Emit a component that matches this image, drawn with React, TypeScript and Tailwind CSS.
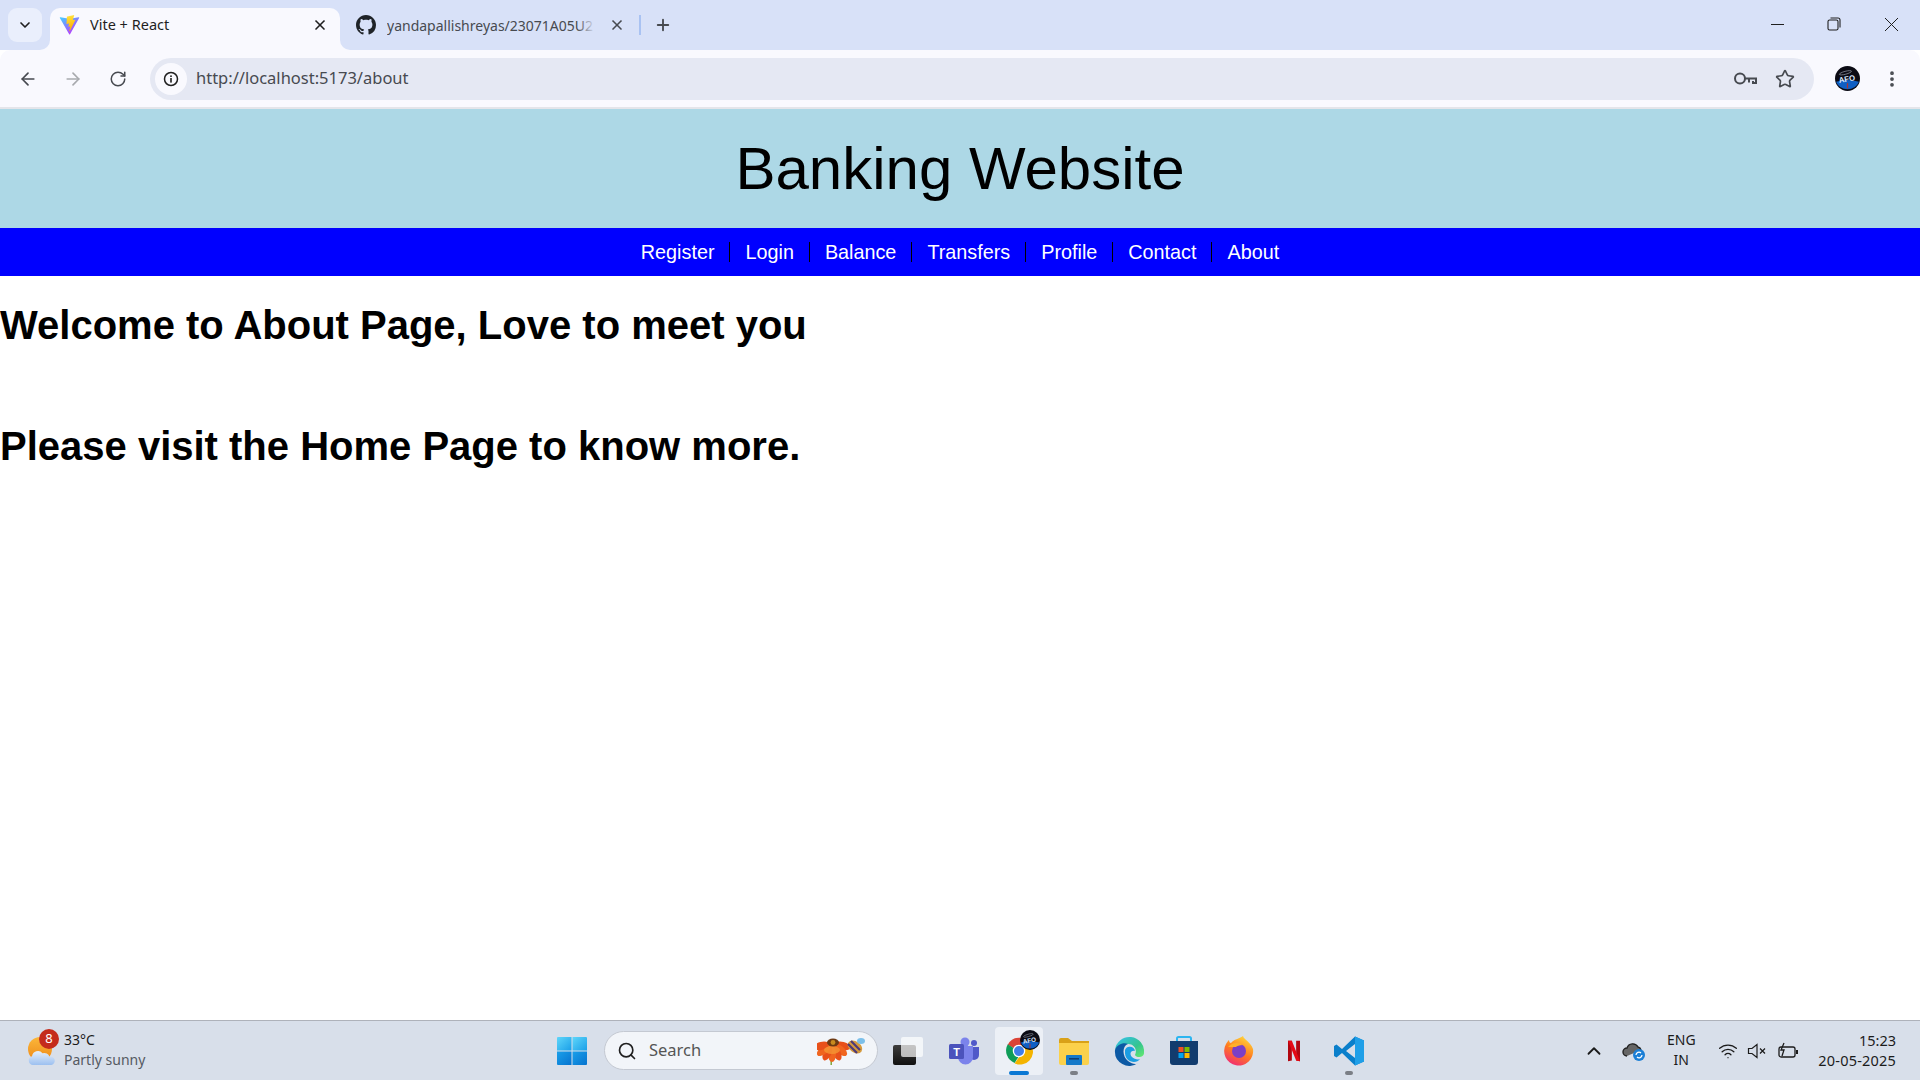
import React from "react";
import { ArrowLeft, ArrowRight, RotateCw, ChevronDown, ChevronUp, X, Plus, Star, EllipsisVertical, Search, Wifi } from "lucide-react";

const navLinks = ["Register", "Login", "Balance", "Transfers", "Profile", "Contact", "About"];

function ViteLogo() {
  return (
    <svg width="21" height="20" viewBox="0 0 410 404">
      <defs>
        <linearGradient id="viteA" x1="0" y1="0" x2="0.7" y2="1">
          <stop offset="0" stopColor="#41d1ff" />
          <stop offset="1" stopColor="#bd34fe" />
        </linearGradient>
        <linearGradient id="viteB" x1="0.4" y1="0" x2="0.5" y2="1">
          <stop offset="0" stopColor="#ffea83" />
          <stop offset="0.1" stopColor="#ffdd35" />
          <stop offset="1" stopColor="#ffa800" />
        </linearGradient>
      </defs>
      <path d="M399.641 59.5246L215.643 388.545C211.844 395.338 202.084 395.378 198.228 388.618L10.5817 59.5563C6.38087 52.1896 12.6802 43.2665 21.0281 44.7586L205.223 77.6824C206.398 77.8924 207.601 77.8904 208.776 77.6763L389.119 44.8058C397.439 43.2894 403.768 52.1434 399.641 59.5246Z" fill="url(#viteA)" />
      <path d="M292.965 1.5744L156.801 28.2552C154.563 28.6937 152.906 30.5903 152.771 32.8664L144.395 174.33C144.198 177.662 147.258 180.248 150.51 179.498L188.42 170.749C191.967 169.931 195.172 173.055 194.443 176.622L183.18 231.775C182.422 235.487 185.907 238.661 189.532 237.56L212.947 230.446C216.577 229.344 220.065 232.527 219.297 236.242L201.398 322.875C200.278 328.294 207.486 331.249 210.492 326.603L212.5 323.5L323.454 102.072C325.312 98.3645 322.108 94.137 318.036 94.9228L279.014 102.454C275.347 103.161 272.227 99.746 273.262 96.1583L298.731 7.86689C299.767 4.27314 296.636 0.855181 292.965 1.5744Z" fill="url(#viteB)" />
    </svg>
  );
}

function GithubMark() {
  return (
    <svg width="20" height="20" viewBox="0 0 16 16" fill="#1f2328">
      <path d="M8 0C3.58 0 0 3.58 0 8c0 3.54 2.29 6.53 5.47 7.59.4.07.55-.17.55-.38 0-.19-.01-.82-.01-1.49-2.01.37-2.53-.49-2.69-.94-.09-.23-.48-.94-.82-1.13-.28-.15-.68-.52-.01-.53.63-.01 1.08.58 1.23.82.72 1.21 1.87.87 2.33.66.07-.52.28-.87.51-1.07-1.78-.2-3.64-.89-3.64-3.95 0-.87.31-1.59.82-2.15-.08-.2-.36-1.02.08-2.12 0 0 .67-.21 2.2.82.64-.18 1.32-.27 2-.27s1.36.09 2 .27c1.53-1.04 2.2-.82 2.2-.82.44 1.1.16 1.92.08 2.12.51.56.82 1.27.82 2.15 0 3.07-1.87 3.75-3.65 3.95.29.25.54.73.54 1.48 0 1.07-.01 1.93-.01 2.2 0 .21.15.46.55.38A8.01 8.01 0 0 0 16 8c0-4.42-3.58-8-8-8z" />
    </svg>
  );
}

function Avatar({ size }: { size: number }) {
  return (
    <svg width={size} height={size} viewBox="0 0 24 24">
      <circle cx="12" cy="12" r="12" fill="#0b0b14" />
      <path d="M1 15 Q12 12 23 15 A12 12 0 0 1 1 15 Z" fill="#0f5fc4" />
      <ellipse cx="10" cy="6.5" rx="6" ry="1.4" fill="none" stroke="#8a8f9a" strokeWidth="0.7" transform="rotate(-15 10 6.5)" />
      <text x="11.5" y="15" textAnchor="middle" fontSize="7.5" fontWeight="700" fill="#dfeaff" transform="rotate(-10 12 13)" fontFamily="'Liberation Sans', sans-serif">AFO</text>
      <rect x="11.4" y="16.5" width="1.2" height="5" fill="#a33" />
    </svg>
  );
}

function WeatherIcon() {
  return (
    <div className="relative h-[36px] w-[36px]">
      <svg width="36" height="36" viewBox="0 0 36 36" className="absolute left-0 top-0">
        <defs>
          <linearGradient id="sun" x1="0" y1="0" x2="0" y2="1">
            <stop offset="0" stopColor="#fbb73a" />
            <stop offset="1" stopColor="#ee8a1a" />
          </linearGradient>
          <linearGradient id="cloud" x1="0" y1="0" x2="0" y2="1">
            <stop offset="0" stopColor="#e6effb" />
            <stop offset="1" stopColor="#9cc0f0" />
          </linearGradient>
        </defs>
        <circle cx="13" cy="16" r="12" fill="url(#sun)" />
        <path d="M6 32 a4.5 4.5 0 0 1 -1 -8.8 a6 6 0 0 1 10.5 -3 a5.5 5.5 0 0 1 7 3.5 a4.2 4.2 0 0 1 2 8.3 Z" fill="url(#cloud)" />
      </svg>
      <span className="absolute left-[12px] top-[-4px] flex h-[20px] w-[20px] items-center justify-center rounded-full bg-[#c42b1c] text-[13px] text-white">8</span>
    </div>
  );
}

function WindowsLogo() {
  return (
    <svg width="30" height="30" viewBox="0 0 30 30">
      <defs>
        <linearGradient id="winA" x1="0" y1="0" x2="1" y2="1">
          <stop offset="0" stopColor="#5fd6fa" />
          <stop offset="1" stopColor="#1a9fe8" />
        </linearGradient>
        <linearGradient id="winB" x1="0" y1="0" x2="1" y2="1">
          <stop offset="0" stopColor="#1aa0ea" />
          <stop offset="1" stopColor="#0673cf" />
        </linearGradient>
      </defs>
      <path d="M1 1 H14.5 V14.5 H0 V2 a1 1 0 0 1 1 -1 Z" fill="url(#winA)" />
      <path d="M15.5 1 H29 a1 1 0 0 1 1 1 V14.5 H15.5 Z" fill="url(#winA)" />
      <path d="M0 15.5 H14.5 V29 H1 a1 1 0 0 1 -1 -1 Z" fill="url(#winB)" />
      <path d="M15.5 15.5 H30 V28 a1 1 0 0 1 -1 1 H15.5 Z" fill="url(#winB)" />
    </svg>
  );
}

function SearchFlower() {
  const petals = [-75, -50, -25, 0, 25, 50, 75];
  return (
    <svg width="48" height="30" viewBox="0 0 48 30">
      <rect x="13.5" y="22" width="1.4" height="7" fill="#79a12e" />
      {petals.map((deg) => (
        <ellipse key={deg} cx="15" cy="18" rx="4" ry="8" fill={deg % 50 === 0 ? "#f0651f" : "#e8501a"} transform={`rotate(${deg} 15 7) `} />
      ))}
      <ellipse cx="15" cy="14" rx="8" ry="4" fill="#f59a35" opacity="0.75" />
      <ellipse cx="16" cy="6.5" rx="6" ry="4" fill="#6d3a12" />
      <circle cx="16" cy="6.5" r="2.4" fill="#c78a1e" />
      <ellipse cx="38" cy="11" rx="8" ry="5.5" fill="#d59a3c" transform="rotate(35 38 11)" />
      <path d="M34 5 L43 14 M31 8 L40 17" stroke="#4d3a78" strokeWidth="2.2" />
      <ellipse cx="44" cy="5" rx="4" ry="3" fill="#7cc0ea" />
    </svg>
  );
}

function TaskViewIcon() {
  return (
    <div className="relative h-[28px] w-[30px]">
      <div className="absolute bottom-0 left-0 h-[20px] w-[23px] rounded-[2px] bg-gradient-to-b from-[#3d3d3d] to-[#111]" />
      <div className="absolute right-0 top-0 h-[20px] w-[22px] rounded-[2px] bg-white/70" />
    </div>
  );
}

function TeamsIcon() {
  return (
    <svg width="30" height="28" viewBox="0 0 30 28">
      <circle cx="25" cy="6" r="3" fill="#5059c9" />
      <path d="M20 10 H30 V18 a5 5 0 0 1 -10 0 Z" fill="#5059c9" />
      <circle cx="16" cy="5" r="4.5" fill="#7b83eb" />
      <path d="M9 9 H24 V20 a7.5 7.5 0 0 1 -15 0 Z" fill="#7b83eb" />
      <rect x="0" y="7" width="15" height="15" rx="1.5" fill="#4b53bc" />
      <text x="7.5" y="19" textAnchor="middle" fontSize="11" fontWeight="700" fill="#fff" fontFamily="'Liberation Sans', sans-serif">T</text>
    </svg>
  );
}

function ChromeIcon() {
  return (
    <svg width="30" height="30" viewBox="0 0 48 48">
      <path d="M24 24 L6 14 A21 21 0 0 1 44 16 L24 16 Z" fill="#db4437" />
      <path d="M6 13 A21 21 0 0 0 17 43 L27 27 Z" fill="#0f9d58" />
      <path d="M44 15 A21 21 0 0 1 17 44 L30 25 L24 15 Z" fill="#f4b400" />
      <circle cx="24" cy="24" r="10" fill="#fff" />
      <circle cx="24" cy="24" r="8" fill="#3f7ee8" />
    </svg>
  );
}

function FolderIcon() {
  return (
    <svg width="30" height="28" viewBox="0 0 30 28">
      <path d="M0 3 a2 2 0 0 1 2 -2 H9 L13 4 H30 V10 H0 Z" fill="#d9a118" />
      <path d="M0 6 H30 V26 a2 2 0 0 1 -2 2 H2 a2 2 0 0 1 -2 -2 Z" fill="#fbd14b" />
      <rect x="7" y="18" width="16" height="10" rx="1" fill="#1479c9" />
      <rect x="10" y="21" width="10" height="1.6" fill="#0c3f75" />
    </svg>
  );
}

function EdgeIcon() {
  return (
    <svg width="30" height="30" viewBox="0 0 30 30">
      <defs>
        <linearGradient id="edgeA" x1="0" y1="0" x2="1" y2="1">
          <stop offset="0" stopColor="#35c1f1" />
          <stop offset="0.6" stopColor="#35c48f" />
          <stop offset="1" stopColor="#66eb6e" />
        </linearGradient>
      </defs>
      <path d="M1 14 A14.5 14.5 0 0 1 30 17 C30 22 22 22 21 19 C24 13 19 7 13 8 C7 8 2 12 1 14 Z" fill="url(#edgeA)" />
      <path d="M1 14 C3 8 10 6 14 8 C8 10 8 20 14 25 C18 28 22 29 24 27 A14.5 14.5 0 0 1 1 14 Z" fill="#0c59a4" />
      <path d="M11 15 C11 10 20 9 21 15 C17 14 15 18 18 21 C20 23 24 24 26 23 C22 29 10 26 11 15 Z" fill="#1b9de2" />
    </svg>
  );
}

function StoreIcon() {
  return (
    <svg width="30" height="30" viewBox="0 0 30 30">
      <path d="M8 6 V2.5 a1.5 1.5 0 0 1 1.5 -1.5 H20.5 a1.5 1.5 0 0 1 1.5 1.5 V6" fill="none" stroke="#2cb5f0" strokeWidth="2" />
      <path d="M1 5 H29 V26 a3 3 0 0 1 -3 3 H4 a3 3 0 0 1 -3 -3 Z" fill="#123c6e" />
      <rect x="9.5" y="11" width="5" height="5" fill="#f25022" />
      <rect x="15.5" y="11" width="5" height="5" fill="#7fba00" />
      <rect x="9.5" y="17" width="5" height="5" fill="#00a4ef" />
      <rect x="15.5" y="17" width="5" height="5" fill="#ffb900" />
    </svg>
  );
}

function FirefoxIcon() {
  return (
    <svg width="30" height="30" viewBox="0 0 30 30">
      <defs>
        <linearGradient id="foxA" x1="0.7" y1="0" x2="0.2" y2="1">
          <stop offset="0" stopColor="#ffd53a" />
          <stop offset="0.5" stopColor="#ff7a1f" />
          <stop offset="1" stopColor="#f0257c" />
        </linearGradient>
      </defs>
      <path d="M19 0 C20 4 26 5 29 13 A14.5 14.5 0 1 1 2 8 C3 6 4 5 5 4 C5 6 6 7 7 7 C10 3 15 3 19 0 Z" fill="url(#foxA)" />
      <circle cx="15" cy="15" r="7" fill="#7b3fc6" />
      <path d="M4 11 C8 6 15 6 19 9 C15 9 13 10 12 11 C9 11 7 11 4 11 Z" fill="#ffb02a" />
    </svg>
  );
}

function NetflixIcon() {
  return (
    <svg width="12" height="22" viewBox="0 0 14 24">
      <path d="M0 0 H4.5 V23 L0 24 Z" fill="#b1060f" />
      <path d="M9.5 0 H14 V24 L9.5 23 Z" fill="#b1060f" />
      <path d="M0 0 H4.5 L14 24 L9.5 23 Z" fill="#e50914" />
    </svg>
  );
}

function VsCodeIcon() {
  return (
    <svg width="30" height="30" viewBox="0 0 30 30">
      <path d="M21 0.5 L30 4.5 V25.5 L21 29.5 L8 17 L2.5 21.5 L0 20 V10 L2.5 8.5 L8 13 Z M21 8 L12 15 L21 22 Z" fill="#0a7fcb" />
      <path d="M21 0.5 L30 4.5 V25.5 L21 29.5 Z" fill="#1f9fe8" />
    </svg>
  );
}

function TaskbarSlot({ children, active, dot }: { children: React.ReactNode; active?: boolean; dot?: boolean }) {
  return (
    <div className={`relative flex h-[48px] w-[48px] items-center justify-center rounded-[4px] ${active ? "bg-[#ecf0f6]" : ""}`}>
      {children}
      {active && <span className="absolute bottom-0 left-[14px] h-[4px] w-[20px] rounded-full bg-[#0a78d4]" />}
      {dot && <span className="absolute bottom-0 left-[20px] h-[4px] w-[8px] rounded-full bg-[#7b7f86]" />}
    </div>
  );
}

export default function App() {
  return (
    <div className="flex h-[1080px] w-[1920px] flex-col overflow-hidden bg-white font-['Liberation_Sans',sans-serif]">
      {/* tab strip */}
      <div className="flex h-[50px] items-end bg-[#d8e1f8] font-['Noto_Sans',sans-serif]">
        <div className="mb-[8px] ml-[8px] flex h-[34px] w-[34px] items-center justify-center rounded-[9px] bg-[#eaeffc] text-[#1f1f1f]">
          <ChevronDown size={16} strokeWidth={2.5} />
        </div>
        <div className="relative ml-[8px] flex h-[42px] w-[290px] items-center rounded-t-[10px] bg-[#f9f9fe] pb-[8px] pl-[9px] pr-[12px]">
          <div className="absolute bottom-0 left-[-10px] h-[10px] w-[10px] bg-[#f9f9fe]">
            <div className="h-full w-full rounded-br-[10px] bg-[#d8e1f8]" />
          </div>
          <div className="absolute bottom-0 right-[-10px] h-[10px] w-[10px] bg-[#f9f9fe]">
            <div className="h-full w-full rounded-bl-[10px] bg-[#d8e1f8]" />
          </div>
          <ViteLogo />
          <span className="ml-[10px] flex-1 text-[14.5px] text-[#1f1f1f]">Vite + React</span>
          <X size={16} strokeWidth={2.5} className="text-[#1f1f1f]" />
        </div>
        <div className="flex h-[42px] items-center pb-[8px] pl-[16px]">
          <GithubMark />
          <div className="relative ml-[11px] w-[208px] overflow-hidden whitespace-nowrap text-[14px] text-[#474a50]">
            yandapallishreyas/23071A05U2
            <div className="absolute bottom-0 right-0 top-0 w-[18px] bg-gradient-to-r from-transparent to-[#d8e1f8]" />
          </div>
          <X size={16} strokeWidth={2.5} className="ml-[14px] text-[#474a50]" />
          <span className="ml-[14px] h-[20px] w-[1.5px] bg-[#a9c2f2]" />
          <Plus size={18} strokeWidth={2.5} className="ml-[13px] text-[#474a50]" />
        </div>
        <div className="ml-auto flex h-[50px] items-center pb-[2px] pr-[22px] text-[#1f1f1f]">
          <svg width="13" height="13" viewBox="0 0 13 13" stroke="#1f1f1f" strokeWidth="1">
            <path d="M0 6.5 H13" />
          </svg>
          <svg width="14" height="14" viewBox="0 0 14 14" fill="none" stroke="#1f1f1f" strokeWidth="1.1" className="ml-[43px]">
            <rect x="1" y="3" width="10" height="10" rx="1.6" />
            <path d="M3.5 1 H11 a2 2 0 0 1 2 2 V10.5" />
          </svg>
          <svg width="13" height="13" viewBox="0 0 13 13" stroke="#1f1f1f" strokeWidth="1" className="ml-[44px]">
            <path d="M0 0 L13 13 M13 0 L0 13" />
          </svg>
        </div>
      </div>

      {/* toolbar */}
      <div className="flex h-[57px] items-center rounded-t-[10px] bg-[#f9f9fe] pl-[18px] pr-[18px] font-['Noto_Sans',sans-serif]">
        <ArrowLeft size={20} strokeWidth={2} className="text-[#474a50]" />
        <ArrowRight size={20} strokeWidth={2} className="ml-[25px] text-[#a8aaae]" />
        <RotateCw size={18} strokeWidth={2} className="ml-[26px] text-[#474a50]" />
        <div className="ml-[23px] flex h-[42px] flex-1 items-center rounded-full bg-[#e5e8f3] pl-[5px] pr-[19px]">
          <span className="flex h-[32px] w-[32px] items-center justify-center rounded-full bg-[#f9f9fe]">
            <svg width="16" height="16" viewBox="0 0 16 16" fill="none">
              <circle cx="8" cy="8" r="6.5" stroke="#1f1f1f" strokeWidth="1.5" />
              <rect x="7.2" y="7" width="1.6" height="4.6" fill="#1f1f1f" />
              <rect x="7.2" y="4.4" width="1.6" height="1.6" fill="#1f1f1f" />
            </svg>
          </span>
          <span className="ml-[9px] flex-1 text-[16.5px] text-[#474a50]">http://localhost:5173/about</span>
          <svg width="23" height="13" viewBox="0 0 23 13" fill="none" stroke="#474a50" strokeWidth="2">
            <circle cx="6" cy="6.5" r="5" />
            <path d="M11 6.5 H22 V11 H19 V9 M15 7 V10.5" />
          </svg>
          <Star size={20} strokeWidth={2} className="ml-[18px] text-[#474a50]" />
        </div>
        <div className="ml-[21px]">
          <Avatar size={25} />
        </div>
        <EllipsisVertical size={20} strokeWidth={2.5} className="ml-[22px] text-[#474a50]" />
      </div>
      <div className="h-[2px] bg-[#e4e5ea]" />

      {/* page */}
      <div className="flex-1 text-black">
        <header className="flex h-[119px] items-center justify-center bg-[#add8e6]">
          <h1 className="text-[60px] font-normal">Banking Website</h1>
        </header>
        <nav className="flex h-[48px] items-center justify-center bg-[#0000ff]">
          {navLinks.map((link, i) => (
            <a key={link} className={`px-[15px] text-[19.8px] leading-[20px] text-white ${i < navLinks.length - 1 ? "border-r border-black" : ""}`}>
              {link}
            </a>
          ))}
        </nav>
        <h2 className="mt-[26px] text-[40px] font-bold leading-[46px]">Welcome to About Page, Love to meet you</h2>
        <h2 className="mt-[75px] text-[40px] font-bold leading-[46px]">Please visit the Home Page to know more.</h2>
      </div>

      {/* taskbar */}
      <div className="flex h-[60px] items-center border-t border-[#aeb2ba] bg-[#d8dfea] font-['Noto_Sans',sans-serif]">
        <div className="flex w-[548px] items-center pl-[27px]">
          <WeatherIcon />
          <div className="-mt-[2px] ml-[1px] flex flex-col text-[14px] leading-[20px]">
            <span className="text-[#1b1b1b]">33°C</span>
            <span className="text-[#555a62]">Partly sunny</span>
          </div>
        </div>
        <TaskbarSlot>
          <WindowsLogo />
        </TaskbarSlot>
        <div className="ml-[8px] flex h-[39px] w-[274px] items-center rounded-full border border-[#c4c9d2] bg-[#f2f5f9] pl-[12px]">
          <Search size={20} strokeWidth={2} className="text-[#1f1f1f]" />
          <span className="ml-[12px] flex-1 text-[16.5px] text-[#555]">Search</span>
          <SearchFlower />
          <span className="w-[12px]" />
        </div>
        <div className="ml-[6px] flex items-center gap-[7px]">
          <TaskbarSlot>
            <TaskViewIcon />
          </TaskbarSlot>
          <div className="ml-[1px]">
            <TaskbarSlot>
              <TeamsIcon />
            </TaskbarSlot>
          </div>
          <TaskbarSlot active>
            <div className="relative">
              <ChromeIcon />
              <div className="absolute right-[-6px] top-[-6px]">
                <Avatar size={20} />
              </div>
            </div>
          </TaskbarSlot>
          <TaskbarSlot dot>
            <FolderIcon />
          </TaskbarSlot>
          <TaskbarSlot>
            <EdgeIcon />
          </TaskbarSlot>
          <TaskbarSlot>
            <StoreIcon />
          </TaskbarSlot>
          <TaskbarSlot>
            <FirefoxIcon />
          </TaskbarSlot>
          <TaskbarSlot>
            <NetflixIcon />
          </TaskbarSlot>
          <TaskbarSlot dot>
            <VsCodeIcon />
          </TaskbarSlot>
        </div>
        <div className="ml-auto flex items-center pr-[24px] text-[#1b1b1b]">
          <ChevronUp size={22} strokeWidth={2} />
          <svg width="24" height="22" viewBox="0 0 24 22" className="ml-[17px]">
            <path d="M5 16 a4 4 0 0 1 0 -8 a6 6 0 0 1 11 -1 a4 4 0 0 1 3 3" fill="#666" stroke="#222" strokeWidth="1.4" />
            <circle cx="17" cy="15" r="6" fill="#1b7fd6" />
            <path d="M14 15 a3 3 0 0 1 5 -2 M20 15 a3 3 0 0 1 -5 2" fill="none" stroke="#fff" strokeWidth="1.3" />
          </svg>
          <div className="-mt-[2px] ml-[11px] flex w-[48px] flex-col items-center text-[14px] leading-[20px]">
            <span>ENG</span>
            <span>IN</span>
          </div>
          <Wifi size={20} strokeWidth={1.6} className="ml-[13px]" />
          <svg width="20" height="18" viewBox="0 0 20 18" fill="none" stroke="#1b1b1b" strokeWidth="1.2" className="ml-[9px]">
            <path d="M1.5 6.5 H5 L10 2.5 V15.5 L5 11.5 H1.5 Z" />
            <path d="M13 6.5 L18 11.5 M18 6.5 L13 11.5" />
          </svg>
          <svg width="22" height="18" viewBox="0 0 22 18" fill="none" stroke="#1b1b1b" strokeWidth="1.3" className="ml-[11px]">
            <rect x="1" y="5" width="16" height="10" rx="2" />
            <path d="M19 8 V12" strokeWidth="2" />
            <path d="M6 1 L3 8 H6 L4 14" />
          </svg>
          <div className="-mt-[2px] ml-[18px] flex flex-col items-end text-[14.5px] leading-[20px]">
            <span>15:23</span>
            <span className="tracking-[0.2px]">20-05-2025</span>
          </div>
        </div>
      </div>
    </div>
  );
}
